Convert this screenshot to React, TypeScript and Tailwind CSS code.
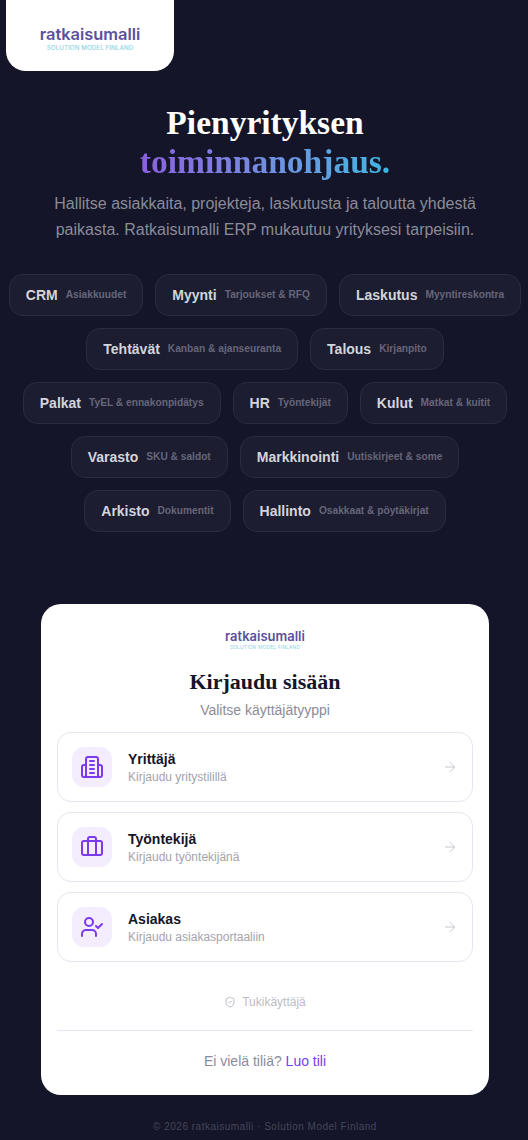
import { ArrowRight, Briefcase, ShieldCheck, UserCheck } from "lucide-react"

const rows = [
  [["CRM", "Asiakkuudet"], ["Myynti", "Tarjoukset & RFQ"], ["Laskutus", "Myyntireskontra"]],
  [["Tehtävät", "Kanban & ajanseuranta"], ["Talous", "Kirjanpito"]],
  [["Palkat", "TyEL & ennakonpidätys"], ["HR", "Työntekijät"], ["Kulut", "Matkat & kuitit"]],
  [["Varasto", "SKU & saldot"], ["Markkinointi", "Uutiskirjeet & some"]],
  [["Arkisto", "Dokumentit"], ["Hallinto", "Osakkaat & pöytäkirjat"]],
]

function BuildingIcon() {
  return (
    <svg width="24" height="24" viewBox="0 0 24 24" fill="none" stroke="currentColor" strokeWidth="2" strokeLinecap="round" strokeLinejoin="round">
      <path d="M6 22V4a2 2 0 0 1 2-2h8a2 2 0 0 1 2 2v18Z" />
      <path d="M6 10H4a2 2 0 0 0-2 2v8a2 2 0 0 0 2 2h2" />
      <path d="M18 10h2a2 2 0 0 1 2 2v8a2 2 0 0 1-2 2h-2" />
      <path d="M10 6h4" />
      <path d="M10 10h4" />
      <path d="M10 14h4" />
      <path d="M10 18h4" />
    </svg>
  )
}

function Logo({ small }: { small?: boolean }) {
  return (
    <div className="flex flex-col items-center font-['Inter',sans-serif] leading-none">
      <span className={small ? "text-[13px] font-semibold text-[#5b4f9e]" : "text-[16.4px] font-semibold text-[#5b4f9e]"}>
        ratkaisumalli
      </span>
      <span className={small ? "mt-[2px] text-[5px] tracking-[0.1px] text-[#8fd3e4]" : "mt-[2px] text-[6.2px] font-medium tracking-[0.1px] text-[#8fd3e4]"}>
        SOLUTION MODEL FINLAND
      </span>
    </div>
  )
}

function RoleRow({ icon, title, sub }: { icon: React.ReactNode; title: string; sub: string }) {
  return (
    <div className="flex h-[70px] items-center rounded-[14px] border border-[#e7e5ef] px-[14px]">
      <div className="flex h-10 w-10 items-center justify-center rounded-xl bg-[#f3edfd] text-[#7c3aed]">{icon}</div>
      <div className="ml-4 flex-1 pt-[2px]">
        <div className="text-[14px] leading-[18px] font-bold text-[#14152a]">{title}</div>
        <div className="mt-[1px] text-[12px] leading-[17px] text-[#a3a3ad]">{sub}</div>
      </div>
      <ArrowRight size={16} strokeWidth={1.5} className="text-[#c9c9d0]" />
    </div>
  )
}

export default function App() {
  return (
    <div className="h-[1140px] overflow-hidden bg-[#141528] pl-[2px] font-['Liberation_Sans',sans-serif]">
      <div className="ml-[4px] flex h-[71px] w-[168px] items-center justify-center rounded-b-[20px] bg-white pt-[6px]">
        <Logo />
      </div>

      <h1 className="mt-[32px] text-center font-['Liberation_Serif',serif] text-[33.5px] leading-[39px] font-bold text-white">
        Pienyrityksen
        <br />
        <span className="bg-gradient-to-r from-[#8b5fe0] to-[#38b6e0] bg-clip-text text-transparent">toiminnanohjaus.</span>
      </h1>
      <p className="mx-auto mt-[10px] w-[470px] text-center text-[16px] leading-[26px] text-[#8b8b99]">
        Hallitse asiakkaita, projekteja, laskutusta ja taloutta yhdestä paikasta. Ratkaisumalli ERP mukautuu yrityksesi tarpeisiin.
      </p>

      <div className="mt-[31px] flex flex-col gap-3">
        {rows.map((row, i) => (
          <div key={i} className="flex justify-center gap-3">
            {row.map(([name, sub]) => (
              <div key={name} className="flex h-[42px] items-center gap-2 rounded-[14px] border border-[#2a2b3f] bg-[#1c1d30] px-4">
                <span className="text-[14px] font-bold whitespace-nowrap text-[#d4d4dc]">{name}</span>
                <span className="text-[10.2px] font-bold whitespace-nowrap text-[#66667a]">{sub}</span>
              </div>
            ))}
          </div>
        ))}
      </div>

      <div className="mx-auto mt-[72px] h-[491px] w-[448px] rounded-[20px] bg-white px-4 pt-[26px]">
        <Logo small />
        <h2 className="mt-[18px] text-center font-['Liberation_Serif',serif] text-[22px] leading-[28px] font-bold text-[#14152a]">Kirjaudu sisään</h2>
        <p className="mt-[4px] text-center text-[14px] leading-[20px] text-[#8b8b99]">Valitse käyttäjätyyppi</p>
        <div className="mt-[12px] flex flex-col gap-[10px]">
          <RoleRow icon={<BuildingIcon />} title="Yrittäjä" sub="Kirjaudu yritystilillä" />
          <RoleRow icon={<Briefcase size={24} strokeWidth={2} />} title="Työntekijä" sub="Kirjaudu työntekijänä" />
          <RoleRow icon={<UserCheck size={24} strokeWidth={2} />} title="Asiakas" sub="Kirjaudu asiakasportaaliin" />
        </div>
        <div className="mt-[32px] flex items-center justify-center gap-[6px] text-[12px] leading-4 text-[#bcbcc4]">
          <ShieldCheck size={12} />
          Tukikäyttäjä
        </div>
        <div className="mt-[20px] border-t border-[#e7e5ef] pt-[20px] text-center text-[14px] leading-5 text-[#8b8b99]">
          Ei vielä tiliä? <span className="text-[#7c3aed]">Luo tili</span>
        </div>
      </div>

      <p className="mt-[26px] text-center text-[10px] leading-[12px] tracking-[0.5px] text-[#45465a]">© 2026 ratkaisumalli · Solution Model Finland</p>
    </div>
  )
}
